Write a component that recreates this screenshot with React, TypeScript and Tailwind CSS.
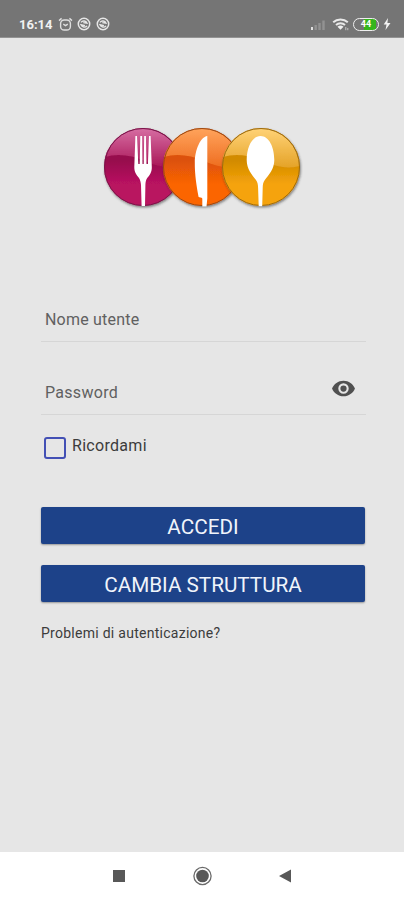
import { useState } from "react";

function StatusBar() {
  return (
    <header className="h-[38px] shrink-0 bg-[#757575] border-b border-[#939393] flex items-center justify-between pt-[11px] pl-[19px] pr-[13px] text-white">
      <div className="flex items-center">
        <span className="w-[35px] text-[13px] leading-none font-bold text-[#f1f1f1]">16:14</span>
        <svg className="ml-[4px]" width="15" height="15" viewBox="0 0 15 15" fill="none" stroke="#dedede" strokeWidth="1.4">
          <rect x="2.6" y="3" width="9.8" height="10" rx="3.6" />
          <path d="M1 3.6 3.6 1.4M14 3.6 11.4 1.4M5.3 7.2 7.5 8.6 9.8 7.2" />
        </svg>
        <SyncIcon className="ml-[4px]" />
        <SyncIcon className="ml-[5px]" />
      </div>
      <div className="flex items-center">
        <svg width="17" height="14" viewBox="0 0 17 14">
          <path d="M1 10h2v3H1z" fill="#e0e0e0" />
          <path d="M4.5 8h2.4v5H4.5zM8.3 6h2.4v7H8.3zM12.3 3.5h2.4V13h-2.4z" fill="#929292" />
        </svg>
        <svg className="ml-[5px]" width="18" height="15" viewBox="0 0 18 15" fill="none" stroke="#e9e9e9" strokeWidth="1.9">
          <path d="M1.2 5.2C5.2 1.5 11.8 1.5 15.8 5.2M4 8C6.5 5.6 10.5 5.6 13 8" />
          <path d="M5.5 9.700C7.5 8.200 9.5 8.200 11.5 9.700L8.5 12.800z" fill="#f0f0f0" stroke="none" />
          <path d="M13.8 10v3.200M15.8 11v2.200" strokeWidth="1" stroke="#c4c4c4" />
        </svg>
        <div className="ml-[3px] w-[26px] h-[13px] rounded-full border-[1.5px] border-[#efefef] bg-[linear-gradient(90deg,#757575_42%,#35b51c_42%,#35b51c_92%,#757575_92%)] flex items-center justify-center text-[9px] leading-none font-bold">
          44
        </div>
        <svg className="ml-[4px]" width="8" height="12" viewBox="0 0 8 12">
          <path d="M5 0 .7 6.5h2.8L2.5 12 7.5 5H4.4z" fill="#f3f3f3" />
        </svg>
      </div>
    </header>
  );
}

function SyncIcon({ className }: { className?: string }) {
  return (
    <svg className={className} width="14" height="14" viewBox="0 0 14 14" fill="none" stroke="#e6e6e6">
      <circle cx="7" cy="7" r="5.7" strokeWidth="1.5" />
      <path d="M4 5.4C5.5 3.2 9 3.5 10 6.2L6.3 5.6M10 8.8C8.5 10.8 5 10.5 4 7.8L8 8.6" strokeWidth="1.4" />
    </svg>
  );
}

const discs = [
  { id: "fork", cx: 143, rim: "#791449", top: "#d66da2", mid: "#a91557", low: "#970d4d", base: "#b91261" },
  { id: "knife", cx: 202, rim: "#9b4a12", top: "#ffa35b", mid: "#ee6d20", low: "#dc5108", base: "#fb6505" },
  { id: "spoon", cx: 261, rim: "#9b6b12", top: "#ffd276", mid: "#e5a328", low: "#d28b02", base: "#f5a309" },
];

function Logo() {
  return (
    <svg width="204" height="88" viewBox="100 124 204 88">
      <defs>
        <filter id="shadow" x="-10%" y="-10%" width="125%" height="125%">
          <feDropShadow dx="0.8" dy="1.5" stdDeviation="0.9" floodColor="#333" floodOpacity="0.55" />
        </filter>
        {discs.map((d) => (
          <g key={d.id}>
            <linearGradient id={d.id + "-top"} x1="0" y1="0" x2="0" y2="1">
              <stop offset="0" stopColor={d.top} />
              <stop offset="1" stopColor={d.mid} />
            </linearGradient>
            <linearGradient id={d.id + "-low"} x1="0" y1="0" x2="0" y2="1">
              <stop offset="0.42" stopColor={d.low} />
              <stop offset="0.72" stopColor={d.base} />
            </linearGradient>
          </g>
        ))}
      </defs>
      {discs.map((d) => (
        <g key={d.id} filter="url(#shadow)">
          <circle cx={d.cx} cy="167" r="39" fill={`url(#${d.id}-low)`} />
          <path
            transform={`translate(${d.cx - 143} 0)`}
            d="M105 157A39 39 0 0 1 181.5 166C171 169 158 167 145 161C132 155 117 153 105 157Z"
            fill={`url(#${d.id}-top)`}
          />
          <circle cx={d.cx} cy="167" r="38.5" fill="none" stroke={d.rim} strokeWidth="1" />
        </g>
      ))}
      <g fill="#fff">
        <path d="M135.400 136h1.600l1.300 28h1.400l.6-28h1.800l.4 28h1.200l.5-28h1.700l.6 28h1.400l1.100-28h1.600l1.200 31c.2 5-2.300 8.500-4.600 11c-1.300 2-1.700 4-1.800 7l-.4 21h-3.400l-.6-21c-.2-3-.8-5-2-7c-2.500-3-4.800-6-4.700-11z" />
        <path d="M207.300 136v62.500l-.8 8h-4.200v-8c-.5-1.500-3-1-3.700-1.500c-1.800-10-4-22-3.800-35c.2-12 5.500-25 12.500-26z" />
        <path d="M260.500 136c8.500 0 13.800 11 13.800 24c0 9-5.500 15-9.500 20c-1.700 2.300-2 4.500-2.100 8l-.5 18.300h-3.500l-.6-18.300c-.1-3.500-.5-5.700-2.100-8c-4-5-9.300-11-9.300-20c0-13 5.300-24 13.800-24z" />
      </g>
    </svg>
  );
}

export default function App() {
  const [remember, setRemember] = useState(false);

  return (
    <div className="w-full h-[900px] flex flex-col bg-[#e6e6e6] font-['Roboto',sans-serif] overflow-hidden">
      <StatusBar />
      <main className="flex-1 flex flex-col pl-[41px] pr-[38px]">
        <div className="mt-[86px] -ml-[41px] -mr-[38px] flex justify-center">
          <Logo />
        </div>

        <div className="mt-[85px] h-[45px] border-b border-[#d6d6d6]">
          <input
            className="w-full h-[44px] px-1 text-[16px] tracking-[0.2px] outline-none placeholder:text-[#606060] placeholder:opacity-100"
            placeholder="Nome utente"
          />
        </div>
        <div className="mt-[28px] h-[45px] border-b border-[#d6d6d6] flex">
          <input
            type="password"
            className="flex-1 min-w-0 h-[44px] px-1 text-[16px] tracking-[0.3px] outline-none placeholder:text-[#606060] placeholder:opacity-100"
            placeholder="Password"
          />
          <svg className="mr-[10px] mt-[6px]" width="25" height="25" viewBox="0 0 24 24" fill="#505050">
            <path d="M12 4.5C7 4.5 2.730 7.610 1 12c1.730 4.390 6 7.5 11 7.5s9.270-3.110 11-7.5c-1.730-4.390-6-7.5-11-7.5zM12 17a5 5 0 1 1 0-10 5 5 0 0 1 0 10zm0-8a3 3 0 1 0 0 6 3 3 0 0 0 0-6z" />
          </svg>
        </div>

        <label className="mt-[20px] ml-[3px] h-[26px] flex items-start text-[16px] leading-[22px] tracking-[0.3px] text-[#3c3c3c]">
          <input
            type="checkbox"
            className="appearance-none mt-[2px] mr-[6px] size-[22px] rounded-[3px] border-2 border-[#4350b5] checked:bg-[#4350b5]"
            checked={remember}
            onChange={(e) => setRemember(e.target.checked)}
          />
          Ricordami
        </label>

        <button className="mt-[46px] w-[324px] h-[37px] pt-[3px] rounded-[2px] bg-[#1d4289] text-[20.7px] leading-[34px] text-[#f0f4fb] shadow-[0_1px_2px_rgba(0,0,0,0.35)]">
          ACCEDI
        </button>
        <button className="mt-[21px] w-[324px] h-[37px] pt-[3px] rounded-[2px] bg-[#1d4289] text-[20.7px] leading-[34px] text-[#f0f4fb] shadow-[0_1px_2px_rgba(0,0,0,0.35)]">
          CAMBIA STRUTTURA
        </button>
        <a className="mt-[21px] text-[14px] leading-[20px] tracking-[0.27px] text-[#3c3c3c]">Problemi di autenticazione?</a>
      </main>
      <nav className="h-[48px] shrink-0 bg-white">
        <svg width="404" height="48" viewBox="0 0 404 48" fill="#585858">
          <path d="M113 18h12v12h-12zM279 24l12-6.5v13z" />
          <circle cx="202.5" cy="24" r="6.3" />
          <circle cx="202.5" cy="24" r="8.6" fill="none" stroke="#6a6a6a" strokeWidth="1.3" />
        </svg>
      </nav>
    </div>
  );
}
